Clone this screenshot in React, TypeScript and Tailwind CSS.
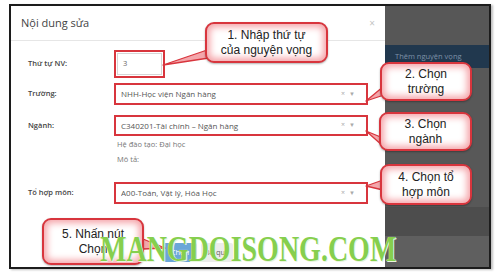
import React from 'react';

const Select = ({ value, h }: { value: string; h: string }) => (
  <div className={`w-[254px] ${h} border-2 border-[#d8353d] bg-white flex items-center px-[5px]`}>
    <span className="flex-1 text-[8px] text-[#555] truncate">{value}</span>
    <span className="text-[7px] text-[#aaa] mr-[4px]">×</span>
    <span className="text-[6px] text-[#aaa] mr-[6px]">▼</span>
  </div>
);

const Label = ({ children }: { children: React.ReactNode }) => (
  <div className="w-[86px] shrink-0 text-[7.5px] font-semibold text-[#444]">{children}</div>
);

const Callout = ({ className, lines }: { className: string; lines: string[] }) => (
  <div
    className={`absolute z-20 border-2 border-[#d8353d] rounded-[9px] bg-white shadow-[inset_0_0_7px_3px_#f5a3a8,0_1px_2px_rgba(0,0,0,0.3)] flex flex-col items-center justify-center text-[12px] leading-[15px] text-[#222] font-['Liberation_Sans',sans-serif] ${className}`}
  >
    {lines.map((l) => (
      <span key={l}>{l}</span>
    ))}
  </div>
);

export default function App() {
  return (
    <div className="relative w-[500px] h-[276px] bg-white overflow-hidden font-['Open_Sans',sans-serif] pt-[4px] pl-[9px]">
      {/* screenshot frame */}
      <div className="w-[482px] h-[265px] border-2 border-[#1c1c1c] flex shadow-[2px_1px_2px_rgba(0,0,0,0.25)]">
        {/* modal */}
        <div className="w-[374px] h-full bg-white flex flex-col">
          <div className="h-[35px] border-b border-[#e6e6e6] flex items-center justify-between pl-[10px] pr-[10px]">
            <span className="text-[11px] text-[#444]">Nội dung sửa</span>
            <span className="text-[10px] text-[#c4c4c4]">×</span>
          </div>

          <div className="pl-[17px] pt-[9px] flex flex-col">
            <div className="flex items-center h-[28px]">
              <Label>Thứ tự NV:</Label>
              <div className="w-[51px] h-[28px] border-2 border-[#d8353d] p-[1px]">
                <div className="w-full h-full border border-[#d6d6d6] flex items-center px-[5px] text-[7.5px] text-[#666]">3</div>
              </div>
            </div>

            <div className="flex items-center mt-[5px]">
              <Label>Trường:</Label>
              <Select value="NHH-Học viện Ngân hàng" h="h-[22px]" />
            </div>

            <div className="flex items-center mt-[10px]">
              <Label>Ngành:</Label>
              <Select value="C340201-Tài chính – Ngân hàng" h="h-[21px]" />
            </div>

            <div className="pl-[89px] text-[7.5px] text-[#777] leading-[15px] pt-[1px]">
              <div>Hệ đào tạo: Đại học</div>
              <div>Mô tả:</div>
            </div>

            <div className="flex items-center mt-[15px]">
              <Label>Tổ hợp môn:</Label>
              <Select value="A00-Toán, Vật lý, Hóa Học" h="h-[22px]" />
            </div>

            <div className="flex gap-[4px] pl-[135px] mt-[39px]">
              <div className="w-[34px] h-[19px] rounded-[2px] bg-[#6aa6d8] text-white text-[7.5px] flex items-center justify-center">Chọn</div>
              <div className="w-[32px] h-[19px] rounded-[2px] bg-[#ececec] text-[#666] text-[7.5px] flex items-center justify-center">Bỏ qua</div>
            </div>
          </div>
        </div>

        {/* backdrop */}
        <div className="flex-1 h-full flex flex-col bg-[#575757]">
          <div className="h-[39px]" />
          <div className="h-[23px] bg-[#21384e] flex items-center pl-[10px] text-[7.5px] text-[#7e91a8] whitespace-nowrap">Thêm nguyện vọng</div>
          <div className="h-[139px] bg-[#585858]" />
          <div className="h-[29px] bg-[#4d4d4d]" />
          <div className="flex-1 bg-[#5f5f5f]" />
        </div>
      </div>

      {/* callout tails */}
      <svg className="absolute inset-0 z-10" width="500" height="276" viewBox="0 0 500 276">
        <g fill="#f4a6ab" stroke="#d8353d" strokeWidth="1.3" strokeLinejoin="round">
          <polygon points="213,48 222,56 163,65" />
          <polygon points="384,86 384,95 366,101" />
          <polygon points="383,138 383,146 366,131" />
          <polygon points="383,180 383,190 366,186" />
          <polygon points="143,239 143,249 165,248" />
        </g>
      </svg>

      <Callout className="left-[205px] top-[22px] w-[123px] h-[41px]" lines={['1. Nhập thứ tự', 'của nguyện vọng']} />
      <Callout className="left-[380px] top-[62px] w-[92px] h-[39px]" lines={['2. Chọn', 'trường']} />
      <Callout className="left-[379px] top-[112px] w-[93px] h-[39px]" lines={['3. Chọn', 'ngành']} />
      <Callout className="left-[380px] top-[164px] w-[92px] h-[41px]" lines={['4. Chọn tổ', 'hợp môn']} />
      <Callout className="left-[42px] top-[218px] w-[102px] h-[47px]" lines={['5. Nhấn nút', 'Chọn']} />

      {/* watermark */}
      <div className="absolute z-30 left-[100px] top-[232px]">
        <span className="inline-block origin-left scale-x-[0.8] font-['Liberation_Serif',serif] font-bold text-[35px] leading-[36px] text-[#86cf4e] whitespace-nowrap [text-shadow:0_0_1px_#fff,1px_1px_0_#e8f5dc]">
          MANGDOISONG.COM
        </span>
      </div>
    </div>
  );
}
